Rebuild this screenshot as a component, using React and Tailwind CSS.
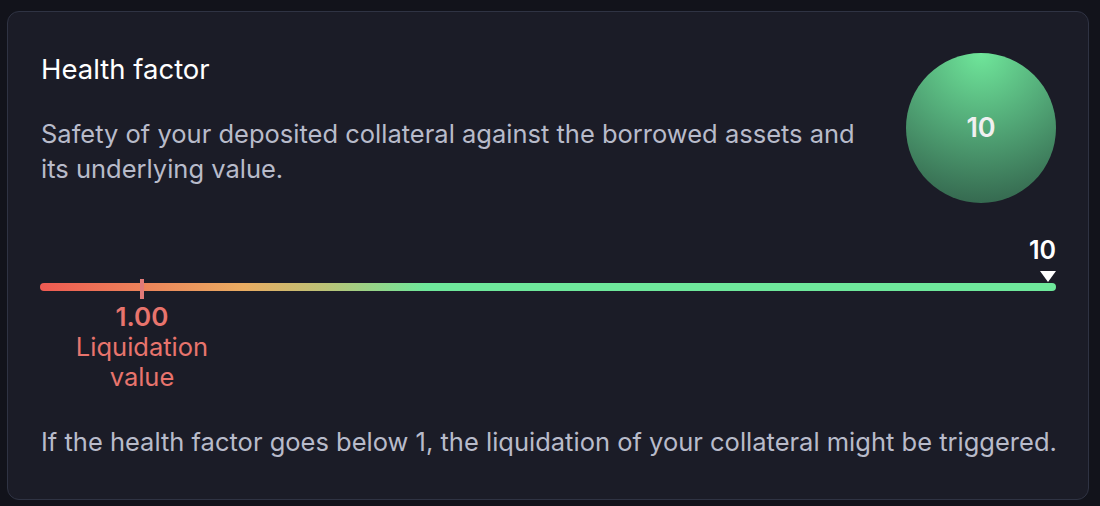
export default function App() {
  return (
    <div className="w-[1100px] h-[506px] bg-[#12131b] pt-[11px] pl-[7px]" style={{ fontFamily: "Inter, 'Noto Sans', sans-serif" }}>
      <div className="w-[1082px] h-[489px] rounded-[12px] border border-[#2f3343] bg-[#1b1c27] px-[32px] pt-[40px]">
        <div className="flex justify-between">
          <div className="pl-[1px]">
            <div className="text-[27.5px] leading-[34px] text-white">Health factor</div>
            <div className="mt-[30px] w-[840px] text-[25.5px] leading-[35px] text-[#b8bbca]">
              Safety of your deposited collateral against the borrowed assets and its underlying value.
            </div>
          </div>
          <div className="mt-[1px] w-[150px] h-[150px] shrink-0 rounded-full flex items-center justify-center bg-[radial-gradient(circle_at_50%_0%,#6fe69a_0%,#52a877_45%,#2f5b47_100%)]">
            <span className="text-[27px] font-semibold text-[#f0f0f0]">10</span>
          </div>
        </div>

        <div className="mt-[32px] flex flex-col items-end">
          <span className="text-[25px] font-semibold leading-[30px] text-white">10</span>
          <div className="mt-[6px] w-0 h-0 border-l-[8px] border-r-[8px] border-t-[11px] border-l-transparent border-r-transparent border-t-white"></div>
        </div>
        <div className="relative mt-[1px] h-[8px] rounded-full bg-[linear-gradient(90deg,#ef5a52_0%,#eaac62_20%,#bcc277_28%,#6ee89b_38%,#6ee89b_100%)]">
          <div className="absolute left-[100px] top-[-4px] w-[4px] h-[20px] bg-[#e17a78]"></div>
        </div>
        <div className="mt-[11px] ml-[32px] w-[140px] flex flex-col items-center text-[#e8746d]">
          <span className="text-[26px] font-semibold leading-[30px]">1.00</span>
          <span className="text-[25.5px] leading-[30px]">Liquidation</span>
          <span className="text-[25.5px] leading-[30px]">value</span>
        </div>

        <div className="mt-[35px] pl-[1px] text-[25.5px] leading-[30px] text-[#b8bbca] whitespace-nowrap">
          If the health factor goes below 1, the liquidation of your collateral might be triggered.
        </div>
      </div>
    </div>
  );
}
